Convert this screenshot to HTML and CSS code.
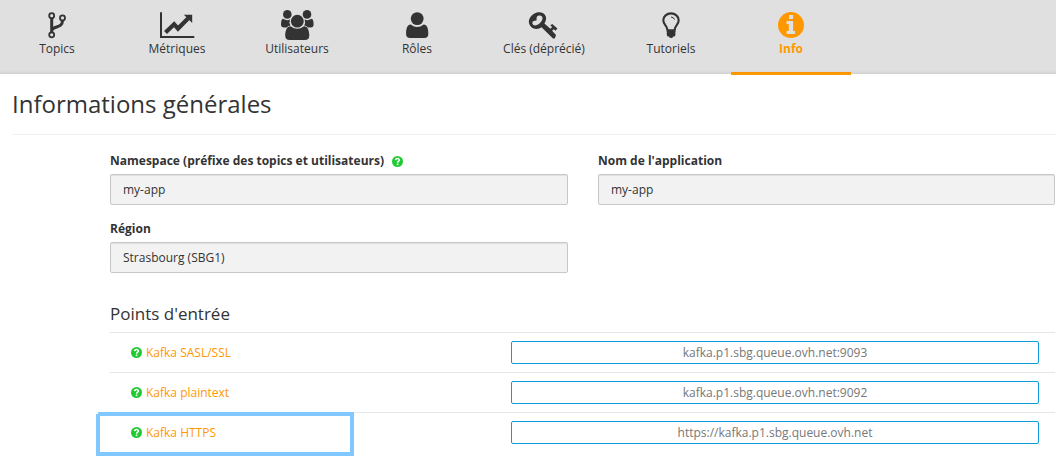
FILE: index.html
```html
<!DOCTYPE html>
<html lang="fr">
<head>
<meta charset="utf-8">
<title>Informations générales</title>
<link rel="stylesheet" href="styles.css">
</head>
<body>
<svg class="defs" aria-hidden="true">
  <symbol id="help" viewBox="0 0 10 10">
    <circle cx="5" cy="5" r="5" fill="#1fcb31"/>
    <path d="M3.2 3.7C3.5 1.8 6.8 1.9 6.7 3.8C6.6 4.7 5.2 4.8 5.1 6.1" fill="none" stroke="#fff" stroke-width="1.4"/>
    <path d="M4.3 6.9h1.5v1.4H4.3z" fill="#fff"/>
  </symbol>
</svg>
<nav class="tabs">
  <a class="tab">
    <svg class="tab-icon" viewBox="0 0 40 34"><g fill="none" stroke="currentColor"><circle cx="14.7" cy="7.7" r="2.5" stroke-width="1.8"/><circle cx="14.7" cy="26.8" r="2.5" stroke-width="1.8"/><circle cx="25.5" cy="9.9" r="2.5" stroke-width="1.8"/><path d="M14.7 10.4V24.2M25.5 12.6C25.5 20.5 16.5 17.5 14.9 22.2" stroke-width="3"/></g></svg>
    <span>Topics</span>
  </a>
  <a class="tab">
    <svg class="tab-icon" viewBox="0 0 40 34"><path d="M3 4.3h2V28h32.3v2H3z"/><path d="M8.5 24.4L17.1 16.2L21 20.6L31 10.6" fill="none" stroke="currentColor" stroke-width="4.2"/><path d="M26.9 6.7h8.3v8.4z"/></svg>
    <span>Métriques</span>
  </a>
  <a class="tab">
    <svg class="tab-icon" viewBox="0 0 40 34"><circle cx="10.3" cy="6.4" r="4.3"/><circle cx="30" cy="6.4" r="4.3"/><path d="M6 10.8Q10.3 13.3 13 11.3Q11.8 15 13.4 17.6Q11.2 17.7 9.7 19.4H7Q4 19.4 4 16.5Q4 11.5 6 10.8zM34.6 10.8Q30.3 13.3 27.6 11.3Q28.8 15 27.2 17.6Q29.4 17.7 30.9 19.4H33.6Q36.6 19.4 36.6 16.5Q36.6 11.5 34.6 10.8z"/><circle cx="20.3" cy="13.2" r="6.4"/><path d="M13.6 18.2Q20.3 23.5 27 18.2C31 18.2 32.3 23 32.3 27.5Q32.3 32 27.8 32H12.8Q8.2 32 8.2 27.5C8.2 23 9.6 18.2 13.6 18.2z"/></svg>
    <span>Utilisateurs</span>
  </a>
  <a class="tab">
    <svg class="tab-icon" viewBox="0 0 40 34"><circle cx="20.2" cy="10.6" r="6.4"/><path d="M13.7 16.6Q20.2 21.6 26.7 16.6C30.3 16.6 31.3 21 31.3 25.7Q31.3 30 27.3 30H13Q9.1 30 9.1 25.7C9.1 21 10.1 16.6 13.7 16.6z"/></svg>
    <span>Rôles</span>
  </a>
  <a class="tab tab-wide">
    <svg class="tab-icon" viewBox="0 0 40 34"><path fill-rule="evenodd" d="M12.3 4.7C16 3.7 20.5 4.5 21.8 8.5C22.7 11.2 21.5 13.6 20.4 15.4L26.4 20.8L28.2 19L26.2 17.2L28.3 16.1L33.4 20.6L31.5 22.7L29.8 21.2L28.1 22.8L32 27L30.8 30.5H29L17.5 19.3C14 22 8.7 21.4 6.2 17.8C2.5 12.5 7 6.2 12.3 4.7zM14.1 7.8C11.8 8.9 12.9 11.2 12.5 12.6C10.8 13 8.6 12.7 8.4 15C8.3 17.2 10.7 18.2 13 17.1C15.7 15.8 18.4 12.9 18.5 10.2C18.5 7.6 16.2 6.9 14.1 7.8z"/></svg>
    <span>Clés (déprécié)</span>
  </a>
  <a class="tab">
    <svg class="tab-icon" viewBox="0 0 40 34"><path d="M16.4 22C16.4 17.6 12.3 17.1 12.3 12.3C12.3 8.3 15.8 5.4 20 5.4S27.7 8.3 27.7 12.3C27.7 17.1 23.6 17.6 23.6 22" fill="none" stroke="currentColor" stroke-width="2.1"/><path d="M20 9Q22.8 9.1 23.5 11.6" fill="none" stroke="currentColor" stroke-width="1"/><path d="M15.5 21.2h9.1v2.6l-.4.8.4.8-.4.9.3.8-.9 1.4h-1.3q-.6 1.6-2.2 1.6t-2.2-1.6h-1.3l-.9-1.4.3-.8-.4-.9.4-.8-.4-.8z"/></svg>
    <span>Tutoriels</span>
  </a>
  <a class="tab tab-active">
    <svg class="tab-icon" viewBox="0 0 40 34"><circle cx="20" cy="17.1" r="13"/><path fill="#e0e0e0" d="M18 7h4.1v4H18zM15.6 13h6.5v10H24v3h-8.4v-3h2.2v-7h-2.2z"/></svg>
    <span>Info</span>
  </a>
</nav>
<main class="page">
  <h1 class="title">Informations générales</h1>
  <div class="content">
    <form class="fields">
      <div class="field"><label class="label">Namespace (préfixe des topics et utilisateurs) <svg class="help"><use href="#help"/></svg></label><div class="input">my-app</div></div>
      <div class="field"><label class="label">Nom de l'application</label><div class="input">my-app</div></div>
      <div class="field"><label class="label">Région</label><div class="input">Strasbourg (SBG1)</div></div>
    </form>
    <h2 class="subtitle">Points d'entrée</h2>
    <div class="entry"><a class="link"><svg class="help"><use href="#help"/></svg>Kafka SASL/SSL</a><div class="address">kafka.p1.sbg.queue.ovh.net:9093</div></div>
    <div class="entry"><a class="link"><svg class="help"><use href="#help"/></svg>Kafka plaintext</a><div class="address">kafka.p1.sbg.queue.ovh.net:9092</div></div>
    <div class="entry"><a class="link"><svg class="help"><use href="#help"/></svg>Kafka HTTPS</a><div class="address">https://kafka.p1.sbg.queue.ovh.net</div><div class="highlight"></div></div>
  </div>
</main>
</body>
</html>
```
FILE: styles.css
```css
* { box-sizing: border-box; }
body {
  min-height: 463px;
  margin: 0;
  overflow: hidden;
  background: #fff;
  color: #333;
  font: 12px/18px "Open Sans", sans-serif;
}
.defs { display: none; }
.tabs {
  display: flex;
  height: 74px;
  margin-left: -3px;
  background: linear-gradient(#e0e0e0 70px, #d2d2d2 74px);
}
.tab {
  display: flex;
  flex-direction: column;
  align-items: center;
  width: 120px;
  height: 75px;
  padding-top: 8px;
  flex: none;
}
.tab-wide { width: 134px; }
.tab-icon { width: 40px; height: 34px; margin-bottom: -2px; fill: currentColor; }
.tab-active { color: #ff9800; font-weight: 700; border-bottom: 3px solid #ff9800; }
.page { padding-left: 12px; }
.title {
  height: 61px;
  margin: 0;
  padding-top: 12px;
  border-bottom: 1px solid #f0f0f0;
  font-size: 24px;
  font-weight: 400;
  line-height: 36px;
}
.content { width: 945px; margin-left: 98px; padding-top: 17px; }
.fields {
  display: grid;
  grid-template-columns: 458px 457px;
  column-gap: 30px;
  row-gap: 15px;
}
.label { display: flex; align-items: center; height: 18px; margin-bottom: 4px; font-weight: 700; }
.help { width: 11px; height: 11px; flex: none; }
.label .help { margin-left: 7.5px; }
.input {
  height: 31px;
  padding: 6px 12px;
  border: 1px solid #c8c8c8;
  border-radius: 2px;
  background: #f2f2f2;
  box-shadow: inset 0 1px 1px rgba(0, 0, 0, .075);
}
.subtitle { height: 59px; margin: 0; padding-top: 29px; font-size: 17px; font-weight: 400; line-height: 24px; }
.entry {
  display: flex;
  position: relative;
  height: 40px;
  padding: 8px 16px 0 20.5px;
  border-top: 1px solid #e6e6e6;
}
.link { display: flex; align-items: center; gap: 4.5px; width: 380.5px; height: 23px; color: #ff9800; }
.address {
  width: 528px;
  height: 23px;
  border: 1px solid #0e9bdc;
  border-radius: 2px;
  color: #777;
  line-height: 21px;
  text-align: center;
}
/* Frame around the HTTPS entry, with a notched top-left corner */
.highlight {
  position: absolute;
  top: -1px;
  left: -14px;
  width: 258px;
  height: 44px;
  border: 4px solid #80c8ff;
  clip-path: polygon(2px 0, 100% 0, 100% 100%, 0 100%, 0 2px, 2px 2px);
}
```
